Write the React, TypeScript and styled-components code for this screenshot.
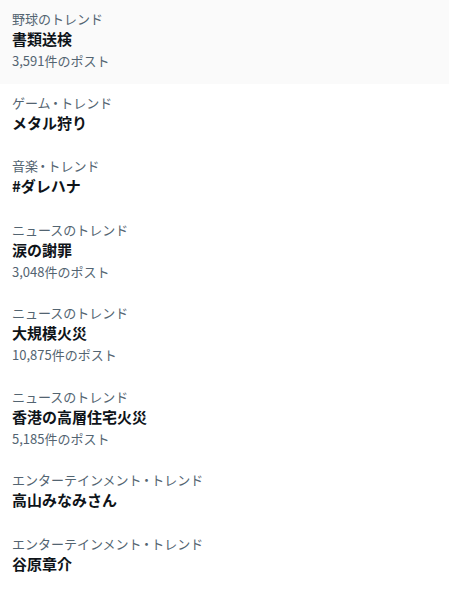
import React from "react";
import styled, { createGlobalStyle } from "styled-components";

const GlobalStyle = createGlobalStyle`
  html, body {
    margin: 0;
    padding: 0;
    background: #ffffff;
  }
  body {
    font-family: "Noto Sans CJK JP", "Noto Sans", "Liberation Sans", sans-serif;
    -webkit-font-smoothing: antialiased;
  }
`;

const List = styled.div`
  display: flex;
  flex-direction: column;
  width: 449px;
`;

const Item = styled.div<{ $hover?: boolean }>`
  display: flex;
  flex-direction: column;
  padding: 11px 12px 14.5px;
  background: ${(p) => (p.$hover ? "#fafafa" : "transparent")};
`;

const Category = styled.div`
  font-size: 13px;
  line-height: 16px;
  color: #536471;
  font-weight: 400;
`;

const Dot = styled.span`
  font-feature-settings: "palt";
  padding: 0 1.5px;
`;

const Title = styled.div`
  margin-top: 2px;
  font-size: 15px;
  line-height: 20px;
  font-weight: 700;
  color: #0f1419;
`;

const Count = styled.div`
  margin-top: 4px;
  font-size: 13px;
  line-height: 16px;
  color: #536471;
`;

type Trend = { category: string; title: string; count?: string };

const trends: Trend[] = [
  { category: "野球のトレンド", title: "書類送検", count: "3,591件のポスト" },
  { category: "ゲーム・トレンド", title: "メタル狩り" },
  { category: "音楽・トレンド", title: "#ダレハナ" },
  { category: "ニュースのトレンド", title: "涙の謝罪", count: "3,048件のポスト" },
  { category: "ニュースのトレンド", title: "大規模火災", count: "10,875件のポスト" },
  { category: "ニュースのトレンド", title: "香港の高層住宅火災", count: "5,185件のポスト" },
  { category: "エンターテインメント・トレンド", title: "高山みなみさん" },
  { category: "エンターテインメント・トレンド", title: "谷原章介" },
];

function renderCategory(text: string) {
  const parts = text.split("・");
  if (parts.length === 1) return text;
  return (
    <>
      {parts[0]}
      <Dot>・</Dot>
      {parts[1]}
    </>
  );
}

export default function App() {
  return (
    <>
      <GlobalStyle />
      <List>
        {trends.map((t, i) => (
          <Item key={i} $hover={i === 0}>
            <Category>{renderCategory(t.category)}</Category>
            <Title>{t.title}</Title>
            {t.count && <Count>{t.count}</Count>}
          </Item>
        ))}
      </List>
    </>
  );
}
